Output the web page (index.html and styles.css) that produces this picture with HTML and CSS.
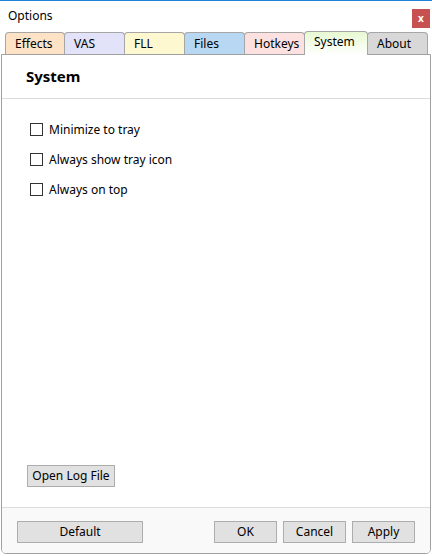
FILE: index.html
```html
<!DOCTYPE html>
<html>
<head>
<meta charset="utf-8">
<link rel="stylesheet" href="styles.css">
</head>
<body>
<div class="window">
  <div class="titlebar">
    <span class="title">Options</span>
    <span class="close">x</span>
  </div>
  <div class="tabs">
    <div class="tab t-effects">Effects</div>
    <div class="tab t-vas">VAS</div>
    <div class="tab t-fll">FLL</div>
    <div class="tab t-files">Files</div>
    <div class="tab t-hotkeys">Hotkeys</div>
    <div class="tab t-system active">System</div>
    <div class="tab t-about">About</div>
  </div>
  <div class="panel">
    <div class="content">
      <div class="heading">System</div>
      <div class="options">
        <label class="check"><span class="box"></span>Minimize to tray</label>
        <label class="check"><span class="box"></span>Always show tray icon</label>
        <label class="check"><span class="box"></span>Always on top</label>
      </div>
      <div class="spacer"></div>
      <div class="logrow"><button class="btn log">Open Log File</button></div>
    </div>
    <div class="footer">
      <button class="btn default">Default</button>
      <div class="right">
        <button class="btn small">OK</button>
        <button class="btn small">Cancel</button>
        <button class="btn small">Apply</button>
      </div>
    </div>
  </div>
</div>
</body>
</html>
```

FILE: styles.css
```css
html, body {
  margin: 0;
  padding: 0;
  background: #ffffff;
}
body {
  font-family: "Noto Sans", "Open Sans", "Liberation Sans", sans-serif;
  font-size: 12px;
  color: #000;
}
.window {
  width: 432px;
  height: 556px;
  display: flex;
  flex-direction: column;
  box-sizing: border-box;
  border-top: 1px solid #1e82d8;
}
.titlebar {
  height: 31px;
  display: flex;
  align-items: center;
  justify-content: space-between;
  padding-left: 8px;
  padding-right: 2px;
  box-sizing: border-box;
}
.title {
  font-size: 12px;
  margin-top: -2px;
}
.close {
  width: 18px;
  height: 19px;
  background: #c75050;
  color: #fff;
  font-weight: bold;
  font-size: 10px;
  display: flex;
  align-items: center;
  justify-content: center;
  line-height: 1;
  margin-top: 4px;
  padding-bottom: 2px;
  box-sizing: border-box;
}
.tabs {
  display: flex;
  padding-left: 5px;
  height: 22px;
  align-items: flex-end;
  position: relative;
  z-index: 2;
}
.tab {
  height: 22px;
  box-sizing: border-box;
  border: 1px solid #a6a6a6;
  border-bottom: none;
  border-radius: 4px 4px 0 0;
  padding-left: 9px;
  line-height: 21px;
  margin-right: -1px;
  color: #000;
}
.t-effects { width: 60px; background: #fde2c6; }
.t-vas { width: 61px; background: #e2e2f8; }
.t-fll { width: 61px; background: #fdf8cf; }
.t-files { width: 61px; background: #b8d7f2; }
.t-hotkeys { width: 61px; background: #fde0e0; }
.t-system {
  width: 64px;
  height: 24px;
  margin-bottom: -1px;
  line-height: 20px;
  background: linear-gradient(#e7f9d1, #ffffff);
}
.t-about { width: 61px; background: #d8d8d8; }
.panel {
  flex: 1;
  margin: 0 1px 2px 1px;
  border: 1px solid #a0a0a0;
  border-radius: 0 0 5px 5px;
  display: flex;
  flex-direction: column;
  overflow: hidden;
  background: #fff;
}
.content {
  flex: 1;
  display: flex;
  flex-direction: column;
}
.heading {
  height: 44px;
  box-sizing: border-box;
  border-bottom: 1px solid #dcdcdc;
  font-weight: bold;
  font-size: 15px;
  padding-left: 24px;
  padding-top: 11px;
}
.options {
  display: flex;
  flex-direction: column;
  padding-top: 21px;
  padding-left: 28px;
  gap: 12px;
}
.check {
  display: flex;
  align-items: center;
  height: 18px;
  font-size: 12px;
}
.box {
  width: 13px;
  height: 13px;
  box-sizing: border-box;
  border: 1px solid #333;
  background: #fff;
  margin-right: 6px;
}
.spacer { flex: 1; }
.logrow {
  padding-left: 25px;
  padding-bottom: 20px;
}
.btn {
  font-family: inherit;
  font-size: 12px;
  background: #e1e1e1;
  border: 1px solid #adadad;
  color: #000;
  height: 22px;
  padding: 0;
  margin: 0;
  line-height: 18px;
}
.log { width: 88px; }
.footer {
  height: 46px;
  box-sizing: border-box;
  border-top: 1px solid #dcdcdc;
  background: #f9f9f9;
  display: flex;
  align-items: flex-start;
  justify-content: space-between;
  padding: 13px 15px 0 15px;
}
.default { width: 126px; }
.right {
  display: flex;
  gap: 6px;
}
.small { width: 63px; }
```
